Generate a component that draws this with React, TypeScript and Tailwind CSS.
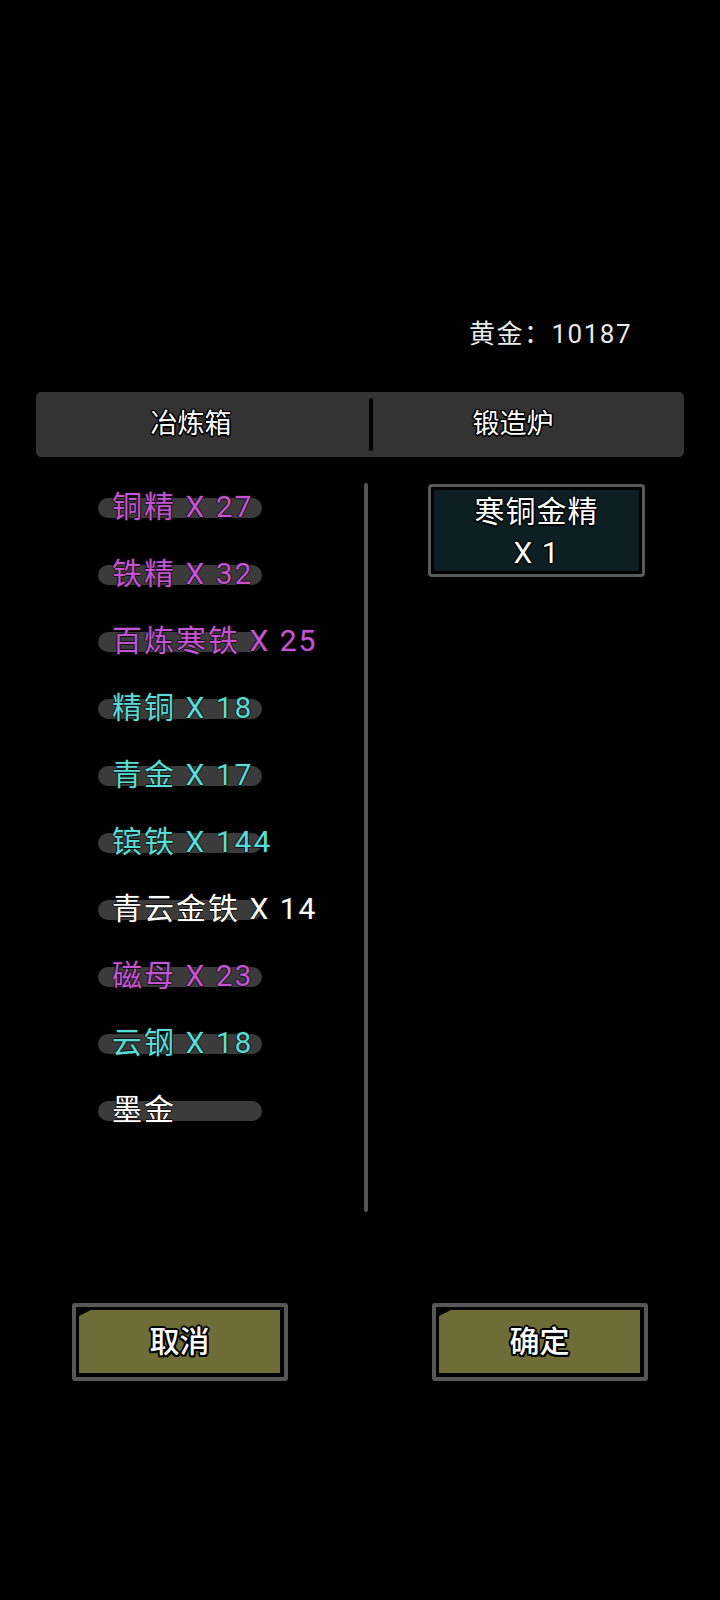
import React from "react";

type Item = { name: string; count?: number; color: string };

const items: Item[] = [
  { name: "铜精", count: 27, color: "text-[#c652d6]" },
  { name: "铁精", count: 32, color: "text-[#c652d6]" },
  { name: "百炼寒铁", count: 25, color: "text-[#c652d6]" },
  { name: "精铜", count: 18, color: "text-[#58dcd8]" },
  { name: "青金", count: 17, color: "text-[#58dcd8]" },
  { name: "镔铁", count: 144, color: "text-[#58dcd8]" },
  { name: "青云金铁", count: 14, color: "text-white" },
  { name: "磁母", count: 23, color: "text-[#c652d6]" },
  { name: "云钢", count: 18, color: "text-[#58dcd8]" },
  { name: "墨金", color: "text-white" },
];

function GameButton({ label }: { label: string }) {
  return (
    <div className="w-[216px] h-[78px] border-[4px] border-[#575757] rounded-[3px] bg-black pt-[3px] pl-[3px] pr-[4px] pb-[4px]">
      <div className="w-full h-full bg-[#6e6c37] [clip-path:polygon(12px_0,100%_0,100%_100%,0_100%,0_6px)] flex items-center justify-center">
        <span className="text-white text-[30px] font-medium leading-none [text-shadow:0_0_2px_#000,2px_0_0_#000,-2px_0_0_#000,0_2px_0_#000,0_-2px_0_#000,1.5px_1.5px_0_#000,-1.5px_-1.5px_0_#000,1.5px_-1.5px_0_#000,-1.5px_1.5px_0_#000]">
          {label}
        </span>
      </div>
    </div>
  );
}

export default function App() {
  return (
    <div className="w-[720px] h-[1600px] bg-black overflow-hidden [font-family:Roboto,'Noto_Sans_CJK_SC','Noto_Sans',sans-serif]">
      {/* gold */}
      <div className="pt-[317px] pr-[88px] flex justify-end">
        <span className="h-[34px] leading-[34px] text-[26px] text-[#e8e8e8] tracking-[1.5px]">
          黄金：10187
        </span>
      </div>

      {/* tabs */}
      <div className="mt-[41px] mx-[36px] h-[65px] rounded-[5px] bg-[#333333] flex items-center">
        <div className="w-[333px] h-full flex items-center justify-center pr-[23px]">
          <span className="text-white text-[27px] leading-none [text-shadow:0_0_2px_#000,1.5px_0_0_#000,-1.5px_0_0_#000,0_1.5px_0_#000,0_-1.5px_0_#000,1px_1px_0_#000,-1px_-1px_0_#000,1px_-1px_0_#000,-1px_1px_0_#000]">
            冶炼箱
          </span>
        </div>
        <div className="w-[4px] h-[53px] rounded-full bg-black" />
        <div className="flex-1 h-full flex items-center justify-center pr-[31px]">
          <span className="text-white text-[27px] leading-none [text-shadow:0_0_2px_#000,1.5px_0_0_#000,-1.5px_0_0_#000,0_1.5px_0_#000,0_-1.5px_0_#000,1px_1px_0_#000,-1px_-1px_0_#000,1px_-1px_0_#000,-1px_1px_0_#000]">
            锻造炉
          </span>
        </div>
      </div>

      {/* content */}
      <div className="mt-[17px] flex items-start">
        <div className="w-[364px] flex flex-col">
          {items.map((it) => (
            <div key={it.name} className="relative h-[67px] flex items-center pl-[112px]">
              <div className="absolute left-[98px] top-1/2 -translate-y-1/2 h-[20px] w-[164px] rounded-full bg-[#3b3b3b]" />
              <span
                className={`relative -top-[1px] whitespace-nowrap text-[30px] leading-[40px] tracking-[2px] ${it.color} [text-shadow:1px_0_0_#111,-1px_0_0_#111,0_1px_0_#111,0_-1px_0_#111]`}
              >
                {it.name}
                {it.count !== undefined ? ` X ${it.count}` : ""}
              </span>
            </div>
          ))}
        </div>
        <div className="mt-[9px] w-[4px] h-[729px] rounded-full bg-[#555555]" />
        <div className="ml-[60px] mt-[10px] w-[217px] h-[93px] border-[3px] border-[#5a5a5a] rounded-[4px] bg-black p-[3px]">
          <div className="w-full h-full bg-[#0d1f22] flex flex-col items-center pt-[1px]">
            <span className="text-white text-[30px] leading-[41px] tracking-[1px] [text-shadow:0_0_2px_#000,1.5px_0_0_#000,-1.5px_0_0_#000,0_1.5px_0_#000,0_-1.5px_0_#000]">
              寒铜金精
            </span>
            <span className="text-white text-[30px] leading-[41px] tracking-[1px] [text-shadow:0_0_2px_#000,1.5px_0_0_#000,-1.5px_0_0_#000,0_1.5px_0_#000,0_-1.5px_0_#000]">
              X 1
            </span>
          </div>
        </div>
      </div>

      {/* buttons */}
      <div className="mt-[91px] pl-[72px] flex gap-[144px]">
        <GameButton label="取消" />
        <GameButton label="确定" />
      </div>
    </div>
  );
}
